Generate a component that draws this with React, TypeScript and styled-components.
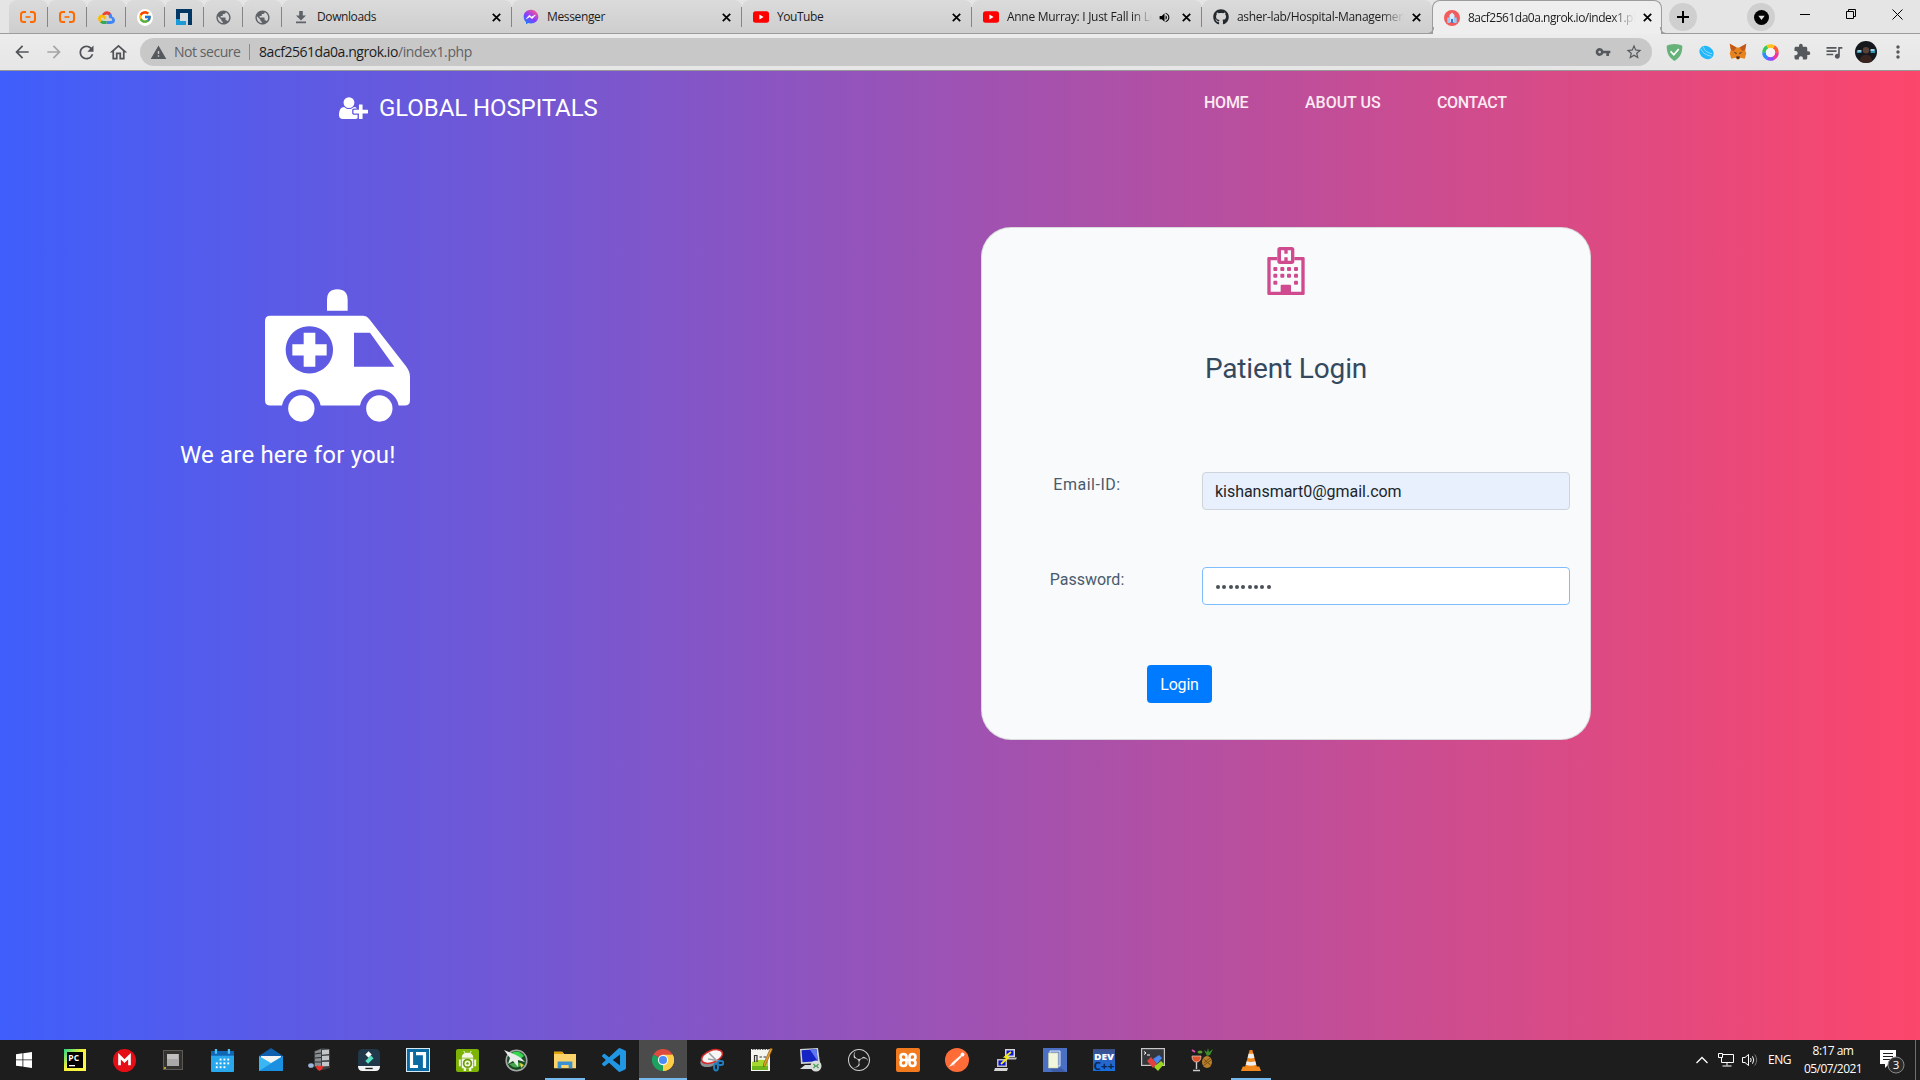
import React from "react";
import styled, { createGlobalStyle, css } from "styled-components";
import {
  MdArrowBack,
  MdArrowForward,
  MdRefresh,
  MdOutlineHome,
  MdWarning,
  MdVpnKey,
  MdStarBorder,
  MdExtension,
  MdQueueMusic,
  MdMoreVert,
  MdPublic,
  MdVolumeUp,
} from "react-icons/md";
import { FaGithub } from "react-icons/fa";
import { FcGoogle } from "react-icons/fc";
import { SiObsstudio } from "react-icons/si";

const ui = '"Open Sans", "Noto Sans", sans-serif';
const page = 'Roboto, "Open Sans", sans-serif';

const GlobalStyle = createGlobalStyle`
  * { box-sizing: border-box; }
  body { margin: 0; overflow: hidden; background: #1d1d1d; }
  svg { display: block; flex: none; }
`;

const Screen = styled.div`
  width: 1920px;
  height: 1080px;
  display: flex;
  flex-direction: column;
  overflow: hidden;
  font-family: ${ui};
`;

/* ---------- browser chrome ---------- */

const TabStrip = styled.div`
  flex: none;
  height: 34px;
  display: flex;
  align-items: stretch;
  padding-left: 9px;
  background: #e5e5e5;
  box-shadow: inset 0 -1px 0 #9c9c9c;
`;

const tabBase = css`
  flex: none;
  display: flex;
  align-items: center;
  padding-top: 1px;
  margin-bottom: 1px;
  background: linear-gradient(#dbdbdb, #cecece);
  border-radius: 8px 8px 0 0;
`;

const PinnedTab = styled.div`
  ${tabBase}
  width: 39px;
  padding-left: 11px;
`;

const Divider = styled.i`
  flex: none;
  width: 1px;
  height: 20px;
  background: #858585;
  margin-left: auto;
`;

const Tab = styled.div<{ $active?: boolean }>`
  ${tabBase}
  width: 230px;
  padding-left: 11px;
  ${(p) =>
    p.$active &&
    css`
      position: relative;
      padding: 0 0 0 11px;
      margin-bottom: 0;
      background: #eeeeee;
      border: 1px solid #9c9c9c;
      border-bottom: 0;
      &::before,
      &::after {
        content: "";
        position: absolute;
        bottom: 0;
        width: 6px;
        height: 6px;
        border-bottom: 1px solid #9c9c9c;
      }
      &::before {
        left: -6px;
        border-right: 1px solid #9c9c9c;
        border-bottom-right-radius: 6px;
      }
      &::after {
        right: -6px;
        border-left: 1px solid #9c9c9c;
        border-bottom-left-radius: 6px;
      }
    `}
`;

const Favicon = styled.span`
  flex: none;
  width: 16px;
  height: 16px;
  display: flex;
  align-items: center;
  justify-content: center;
`;

const TabTitle = styled.span<{ $spacing?: number; $fade?: boolean; $width?: number }>`
  flex: none;
  margin-left: 8px;
  width: ${(p) => p.$width ?? 166}px;
  overflow: hidden;
  white-space: nowrap;
  font-size: 12px;
  line-height: 18px;
  color: #1c1c1c;
  letter-spacing: ${(p) => p.$spacing ?? -0.35}px;
  ${(p) => p.$fade && "mask-image: linear-gradient(90deg, #000 86%, transparent 100%);"}
`;

const CloseBox = styled.span`
  flex: none;
  width: 9px;
  height: 9px;
  margin-left: 8px;
`;

const TabSound = styled.span`
  flex: none;
  width: 13px;
  margin: 0 3px 0 6px;
`;

const RoundButton = styled.span<{ $gap: number }>`
  flex: none;
  width: 28px;
  height: 28px;
  margin: 3px 0 0 ${(p) => p.$gap}px;
  border-radius: 50%;
  background: #cfcfcf;
  display: flex;
  align-items: center;
  justify-content: center;
`;

const WindowButtons = styled.div`
  display: flex;
  height: 28px;
  margin-left: 7px;
`;

const WindowButton = styled.span`
  width: 46px;
  display: flex;
  align-items: center;
  justify-content: center;
`;

const Toolbar = styled.div`
  flex: none;
  height: 37px;
  display: flex;
  align-items: center;
  padding: 0 6px;
  background: linear-gradient(#ececec, #e6e6e6);
  border-bottom: 1px solid #979797;
  color: #55585c;
`;

const NavButton = styled.span<{ $dim?: boolean }>`
  width: 32px;
  height: 32px;
  display: flex;
  align-items: center;
  justify-content: center;
  color: ${(p) => (p.$dim ? "#a5a5a5" : "#505357")};
`;

const Omnibox = styled.div`
  width: 1512px;
  height: 28px;
  margin: 0 6px;
  padding: 0 9px 0 10px;
  display: flex;
  align-items: center;
  border-radius: 14px;
  background: #c8c8c8;
`;

const AddressText = styled.span<{ $tone: string; $spacing: number }>`
  font-size: 14px;
  line-height: 20px;
  white-space: nowrap;
  color: ${(p) => p.$tone};
  letter-spacing: ${(p) => p.$spacing}px;
`;

const SecurityNote = styled.span`
  display: flex;
  align-items: center;
  width: 92px;
  margin-right: 7px;
  gap: 7px;
`;

const AddressRule = styled.i`
  width: 1px;
  height: 16px;
  margin-right: 9px;
  background: #8b8b8b;
`;

const OmniboxActions = styled.span`
  margin-left: auto;
  display: flex;
  align-items: center;
  gap: 14px;
`;

const Extension = styled.span`
  width: 32px;
  display: flex;
  justify-content: center;
  align-items: center;
`;

/* ---------- hospital page ---------- */

const Page = styled.main`
  flex: none;
  height: 969px;
  display: flex;
  flex-direction: column;
  font-family: ${page};
  color: #fff;
  background: linear-gradient(90deg, #3f5efb, #fc466b);
`;

const NavBar = styled.nav`
  height: 74px;
  display: flex;
  align-items: flex-start;
  padding-left: 339px;
`;

const Brand = styled.a`
  width: 865px;
  display: flex;
  align-items: center;
  padding-top: 22px;
  gap: 11px;
  font-size: 24px;
  line-height: 30px;
  letter-spacing: -0.08px;
  color: #fff;
`;

const NavLink = styled.a<{ $width: number; $spacing: number }>`
  width: ${(p) => p.$width}px;
  padding-top: 20px;
  font-size: 16px;
  line-height: 24px;
  font-weight: 500;
  letter-spacing: ${(p) => p.$spacing}px;
  color: #fbeaf3;
  white-space: nowrap;
`;

const Content = styled.section`
  flex: 1;
  display: flex;
  align-items: flex-start;
`;

const Welcome = styled.div`
  width: 981px;
  padding: 144px 0 0 180px;
`;

const Ambulance = styled.svg`
  width: 145px;
  height: 133px;
  margin-left: 85px;
`;

const Tagline = styled.h3`
  margin: 17px 0 0;
  font-size: 24px;
  line-height: 32px;
  font-weight: 400;
  letter-spacing: 0.17px;
`;

const LoginCard = styled.div`
  width: 610px;
  height: 513px;
  margin-top: 82px;
  padding: 19px 20px 0;
  border: 1px solid rgba(0, 0, 0, 0.125);
  border-radius: 30px;
  background: #f8fafc;
  color: #495057;
`;

const HospitalMark = styled.svg`
  width: 38px;
  height: 48px;
  margin: 0 auto;
`;

const CardTitle = styled.h3`
  margin: 56px 0 0;
  text-align: center;
  font-size: 28px;
  line-height: 36px;
  font-weight: 400;
  letter-spacing: -0.15px;
  color: #34495e;
`;

const Field = styled.label<{ $gap: number }>`
  display: grid;
  grid-template-columns: 170px 368px;
  column-gap: 30px;
  margin-top: ${(p) => p.$gap}px;
`;

const FieldLabel = styled.span<{ $spacing?: number }>`
  text-align: center;
  font-size: 16px;
  line-height: 25px;
  color: #495b6c;
  letter-spacing: ${(p) => p.$spacing ?? 0}px;
`;

const Input = styled.input`
  width: 368px;
  height: 38px;
  padding: 1px 12px 0;
  border: 1px solid #ced4da;
  border-radius: 4px;
  outline: none;
  background: #e8f0fe;
  font: 400 16px/24px ${page};
  letter-spacing: -0.03px;
  color: #212529;
`;

const PasswordBox = styled.div`
  width: 368px;
  height: 38px;
  padding: 0 13px;
  display: flex;
  align-items: center;
  gap: 2.35px;
  border: 1px solid #80bdff;
  border-radius: 4px;
  background: #fff;
`;

const Dot = styled.i`
  width: 4px;
  height: 4px;
  margin-top: 2px;
  border-radius: 50%;
  background: #495057;
`;

const LoginButton = styled.button`
  display: block;
  width: 65px;
  height: 38px;
  margin: 60px 0 0 145px;
  padding: 1px 0 0;
  border: 0;
  border-radius: 4px;
  background: #007bff;
  color: #fff;
  font: 400 16px/24px ${page};
  letter-spacing: -0.2px;
`;

/* ---------- taskbar ---------- */

const Taskbar = styled.footer`
  flex: none;
  height: 40px;
  display: flex;
  background: #1d1d1d;
  color: #fff;
`;

const Apps = styled.div`
  display: flex;
  gap: 1px;
`;

const AppSlot = styled.span<{ $state?: "open" | "current"; $first?: boolean }>`
  width: 48px;
  height: 40px;
  margin-right: ${(p) => (p.$first ? 2 : 0)}px;
  display: flex;
  align-items: center;
  justify-content: center;
  background: ${(p) => (p.$state === "current" ? "#4b4b4b" : "transparent")};
  ${(p) => p.$state === "current" && "box-shadow: inset 0 -2px 0 #76b9ed;"}
  ${(p) =>
    p.$state === "open" &&
    "background: linear-gradient(#76b9ed, #76b9ed) center bottom / 40px 2px no-repeat;"}
`;

const Tray = styled.div`
  margin-left: auto;
  display: flex;
  align-items: center;
`;

const TrayIcon = styled.span<{ $gap: number }>`
  margin-right: ${(p) => p.$gap}px;
`;

const Language = styled.span`
  width: 36px;
  font-size: 12px;
  line-height: 16px;
  letter-spacing: -0.45px;
`;

const Clock = styled.span`
  width: 58px;
  display: flex;
  flex-direction: column;
  align-items: center;
  font-size: 12px;
  line-height: 18px;
  letter-spacing: -0.55px;
  white-space: nowrap;
`;

const Notifications = styled.span`
  margin: 2px 9px 0 18px;
`;

const DesktopEdge = styled.i`
  width: 5px;
  height: 40px;
  border-left: 1px solid #6e6e6e;
`;

/* ---------- drawings ---------- */

const Svg = ({ size = 24, box = "0 0 24 24", children }: { size?: number; box?: string; children: React.ReactNode }) => (
  <svg width={size} height={size} viewBox={box}>
    {children}
  </svg>
);

const AliIcon = () => (
  <Svg size={16} box="0 0 16 16">
    <g fill="none" stroke="#ff6a00" strokeWidth="2">
      <path d="M6 3H3.600Q1 3 1 5.500v5Q1 13 3.600 13H6M10 3h2.400Q15 3 15 5.500v5Q15 13 12.400 13H10" />
      <path d="M5.500 8h5" strokeWidth="1.600" />
    </g>
  </Svg>
);

const CloudIcon = () => (
  <Svg size={17} box="0 0 24 20">
    <path d="M5 8Q7 1 13 1q4 0 6 4l-3 3q-2-3-5-2Q8 6 8 9z" fill="#ea4335" />
    <path d="M18 4q2 2 2 4.500 4 1.500 4 5.500 0 5-6 5h-6v-4h6q2 0 2-2 0-1.500-2-2h-2q0-2-1-3z" fill="#4285f4" />
    <path d="M5 18q-5-2-5-6.500Q0 6 6 6q4 0 6 4l-3 3q-1-3-3-3-2 0-2 2 0 1 1.500 2.500z" fill="#fbbc05" />
    <path d="M3 17l3-3 1 .8h5V19H7q-2 0-4-2z" fill="#34a853" />
  </Svg>
);

const GoogleTile = styled.span`
  width: 17px;
  height: 17px;
  border-radius: 50%;
  background: #fff;
  display: flex;
  align-items: center;
  justify-content: center;
`;

const LinuxFoundationIcon = () => (
  <Svg size={16} box="0 0 16 16">
    <path d="M0 0h16v16h-4V4H4v6H0z" fill="#003764" />
    <path d="M0 10h4v2h6v4H0z" fill="#1a9ad7" />
    <path d="M4 4h8v8H4z" fill="#d8dde0" />
  </Svg>
);

const DownloadIcon = () => (
  <Svg size={14} box="0 0 14 14">
    <path d="M5.200 1h3.600v4.500H12L7 10.500 2 5.500h3.200zM2 11.500h10v1.700H2z" fill="#5f6368" />
  </Svg>
);

const MessengerIcon = () => (
  <Svg size={16}>
    <defs>
      <linearGradient id="msg" x1="0.1" y1="1" x2="0.8" y2="0">
        <stop offset="0" stopColor="#0a84ff" />
        <stop offset=".5" stopColor="#8a3cff" />
        <stop offset="1" stopColor="#ff5c87" />
      </linearGradient>
    </defs>
    <path d="M12 1C5.500 1 1 5.600 1 11.600c0 3.200 1.300 5.900 3.500 7.800V23l3.400-1.900c1.300.4 2.700.6 4.100.6 6.500 0 11-4.600 11-10.100S18.500 1 12 1z" fill="url(#msg)" />
    <path d="M5 14.500l4.500-5.200 3.500 2.700 5.500-3-4.800 5.500-3.500-2.700z" fill="#fff" stroke="#fff" />
  </Svg>
);

const YoutubeIcon = () => (
  <Svg size={16} box="0 0 16 16">
    <rect y="2.300" width="16" height="11.400" rx="2.500" fill="#f00" />
    <path d="M6.400 5.600v4.800L10.600 8z" fill="#fff" />
  </Svg>
);

const SiteIcon = () => (
  <Svg size={16} box="0 0 16 16">
    <circle cx="8" cy="8" r="8" fill="#f25b5b" />
    <path d="M5.500 5L8 2.500 10.500 5v7h-5z" fill="#d7ecff" />
    <path d="M3.300 7.500h3V13h-3zM9.700 7.500h3V13h-3z" fill="#9bc8f5" />
    <path d="M7 9h2v4H7z" fill="#3b7bc4" />
  </Svg>
);

const Cross = () => (
  <Svg size={9} box="0 0 9 9">
    <path d="M.8.800l7.400 7.400M8.200.800L.8 8.200" stroke="#000" strokeWidth="1.700" />
  </Svg>
);

const Adguard = () => (
  <Svg size={17}>
    <path d="M12 0c4 0 8 1 11 2.500 0 8-1 15-11 21.500C2 17.500 1 10.500 1 2.500 4 1 8 0 12 0z" fill="#67b279" />
    <path d="M6.500 10.500l4.500 4.800L18 7" fill="none" stroke="#fff" strokeWidth="2.400" />
  </Svg>
);

const BlueSwirl = () => (
  <Svg size={15}>
    <ellipse cx="12" cy="12" rx="12" ry="10" transform="rotate(35 12 12)" fill="#22b6fb" />
    <path d="M3 6q4 10 17 12M7 3q2 9 14 11" fill="none" stroke="#a5e4ff" strokeWidth="1.300" />
  </Svg>
);

const Fox = () => (
  <Svg size={18}>
    <path d="M1 1l9 5h4l9-5-1.500 8 1.500 5-2 7-6-1.500L13 22h-2l-2.500-2.500L3 21l-2-7 1.500-5z" fill="#e8821e" />
    <path d="M1 1l9 5-4 5-3.500-2zM23 1l-9 5 4 5 3.500-2z" fill="#c1581a" />
    <path d="M6 12l4 1v2zM18 12l-4 1v2z" fill="#27313a" />
    <path d="M9.500 18h5l-1 3h-3z" fill="#3b2a22" />
  </Svg>
);

const ColorRing = () => (
  <Svg size={17}>
    <g fill="none" strokeWidth="5" strokeDasharray="9.600 47.900">
      {["#ff5a36", "#f0379b", "#8a4dff", "#2e8bff", "#35c759", "#ffc21a"].map((c, i) => (
        <circle key={c} cx="12" cy="12" r="9.150" stroke={c} transform={`rotate(${-60 + i * 60} 12 12)`} />
      ))}
    </g>
    <circle cx="12" cy="12" r="6.500" fill="#f4f4f4" />
  </Svg>
);

const Avatar = () => (
  <Svg size={22}>
    <clipPath id="av">
      <circle cx="12" cy="12" r="12" />
    </clipPath>
    <g clipPath="url(#av)">
      <rect width="24" height="24" fill="#14181d" />
      <path d="M2 10h5v3H2zM17 9h5v4h-5z" fill="#2f93b3" />
      <path d="M3 10h4v1.500H3zM17 9h4v1.500h-4z" fill="#cfe9ee" />
      <circle cx="12" cy="10" r="3.500" fill="#5a4036" />
      <path d="M5 24q0-9 7-9t7 9z" fill="#3a2420" />
    </g>
  </Svg>
);

const UserPlus = () => (
  <svg width="29" height="22" viewBox="0 0 2048 1536">
    <path
      fill="#fff"
      d="M704 768q-159 0-271.500-112.500T320 384 432.500 112.500 704 0t271.500 112.500T1088 384 975.500 655.500 704 768zm960 128h352q13 0 22.500 9.500t9.500 22.500v192q0 13-9.500 22.500t-22.500 9.500h-352v352q0 13-9.500 22.500t-22.500 9.500h-192q-13 0-22.500-9.500t-9.500-22.500v-352h-352q-13 0-22.500-9.500t-9.500-22.500V928q0-13 9.500-22.500t22.500-9.500h352V544q0-13 9.500-22.500t22.500-9.500h192q13 0 22.500 9.500t9.500 22.500v352zm-736 224q0 52 38 90t90 38h256v238q-68 50-171 50H267q-121 0-194-69T0 1279q0-53 3.500-103.500t14-109T44 958t43-97.500 62-81 85.500-53.500T346 704q19 0 39 17 79 61 154.500 91.500T704 843t164.500-30.500T1023 721q20-17 39-17 132 0 217 96h-223q-52 0-90 38t-38 90v192z"
    />
  </svg>
);

const apps: { name: string; state?: "open" | "current"; icon: React.ReactNode }[] = [
  {
    name: "start",
    icon: (
      <Svg size={16} box="0 0 16 16">
        <path d="M0 2.200l6.500-.9v6.200H0zM7.300 1.200L16 0v7.500H7.300zM0 8.300h6.500v6.300L0 13.700zM7.300 8.300H16V16l-8.700-1.300z" fill="#fff" />
      </Svg>
    ),
  },
  {
    name: "pycharm",
    icon: (
      <Svg size={22} box="0 0 22 22">
        <defs>
          <linearGradient id="pc" x2="1" y2="1">
            <stop offset="0" stopColor="#21d789" />
            <stop offset=".45" stopColor="#f4f03a" />
            <stop offset="1" stopColor="#fcf84a" />
          </linearGradient>
        </defs>
        <rect width="22" height="22" fill="url(#pc)" />
        <rect x="3" y="3" width="16" height="16" fill="#000" />
        <text x="4.300" y="11.500" fontSize="8.500" fontWeight="700" fontFamily="Open Sans" fill="#fff">PC</text>
        <path d="M5 16h6v1.300H5z" fill="#fff" />
      </Svg>
    ),
  },
  {
    name: "mega",
    icon: (
      <Svg size={23}>
        <circle cx="12" cy="12" r="12" fill="#e50e16" />
        <path d="M6.800 17V7.500L12 12.600l5.200-5.100V17" fill="none" stroke="#fff" strokeWidth="2.800" />
      </Svg>
    ),
  },
  {
    name: "cpu",
    icon: (
      <Svg size={20} box="0 0 20 20">
        <rect width="20" height="20" fill="#5a5955" />
        <rect x="1" y="1" width="18" height="18" fill="#33322f" />
        <rect x="4" y="4" width="12" height="12" fill="#a9a9a9" />
        <rect x="4" y="4" width="11" height="5" fill="#c0c0c0" />
        <path d="M1 17h2v2H1z" fill="#b99a3c" />
      </Svg>
    ),
  },
  {
    name: "calendar",
    icon: (
      <Svg size={23}>
        <rect y="2" width="24" height="22" rx="1" fill="#2aa8ee" />
        <path d="M0 2h24v5H0z" fill="#1066b5" />
        <path d="M4 0h2.400v5H4zM17.500 0h2.400v5h-2.400z" fill="#4bc3f5" />
        <g fill="#fff">
          {[[9, 10], [13, 10], [17, 10], [5, 14], [9, 14], [13, 14], [17, 14], [5, 18], [9, 18], [13, 18]].map(([x, y]) => (
            <rect key={`${x}-${y}`} x={x} y={y} width="2" height="2" />
          ))}
        </g>
      </Svg>
    ),
  },
  {
    name: "mail",
    icon: (
      <Svg>
        <path d="M0 8L12 0l12 8v4H0z" fill="#0f5fae" />
        <path d="M2 8h20v8H2z" fill="#f3f3f3" />
        <path d="M0 8l12 7 12-7v15H0z" fill="#39b7f5" />
        <path d="M0 23L24 8v15z" fill="#1b8fe0" />
      </Svg>
    ),
  },
  {
    name: "server",
    icon: (
      <Svg>
        <path d="M6 3l8-3 8 1v19l-7 2-9-3z" fill="#3d4043" />
        <path d="M7 3.500l6-2.500v19l-6-2z" fill="#8b8e90" />
        <path d="M14 2l7-.5v4.500l-7 .8zM14 8l7-.5v4.500l-7 .5zM14 14l7-.2V18l-7 .6z" fill="#c3c6c8" />
        <path d="M7 6l6-1M7 10l6-.5M7 14h6" stroke="#2b2e30" />
        <ellipse cx="3" cy="17.500" rx="2.800" ry="2.300" fill="#9eb6dc" />
        <path d="M8 18.500q2-2 3.500 0 2-2 3.500 0 0 2.500-3.500 4.500Q8 21 8 18.500z" fill="#e5322d" />
      </Svg>
    ),
  },
  {
    name: "filmora",
    icon: (
      <Svg size={22}>
        <rect width="24" height="24" rx="5" fill="#20384a" />
        <path d="M11.500 2.500L15 6l-3.500 3.500L8 6z" fill="#fff" />
        <path d="M14 7l3 3-6 6-3-3z" fill="#55e0c2" />
        <path d="M0 18.500h24q0 5.500-5 5.500H5q-5 0-5-5.500z" fill="#f4f4f4" />
        <path d="M8 20.500h8v1.500H8z" fill="#222" />
      </Svg>
    ),
  },
  {
    name: "ltspice",
    icon: (
      <Svg>
        <rect width="24" height="24" fill="#d5e9f5" />
        <rect x="1" y="1" width="22" height="22" fill="#0a6aa1" />
        <path d="M5.500 4v14.500h6.500M10 5.700h8.500V20" fill="none" stroke="#fff" strokeWidth="3.200" />
      </Svg>
    ),
  },
  {
    name: "android",
    icon: (
      <Svg size={23}>
        <rect width="24" height="24" rx="2" fill="#7cb305" />
        <path d="M6 9q0-5 6-5t6 5zM6 10h12v10H6zM3 11h2v7H3zM19 11h2v7h-2zM8 20h2.500v3H8zM13.500 20H16v3h-2.500z" fill="#f2f7e4" />
        <path d="M8 2l2 3M16 2l-2 3" stroke="#f2f7e4" />
        <circle cx="12" cy="15" r="4" fill="none" stroke="#6a9a0a" strokeWidth="1.800" />
        <circle cx="12" cy="15" r="1.300" fill="#6a9a0a" />
      </Svg>
    ),
  },
  {
    name: "modeler",
    icon: (
      <Svg>
        <circle cx="12.500" cy="12.500" r="10.300" fill="#174a22" stroke="#a4a8a5" strokeWidth="1.600" />
        <path d="M6 6q8-6 14 2l-4 3z" fill="#37d650" />
        <path d="M5 16q7 7 14 0l-6-2z" fill="#48a64c" />
        <path d="M0 2l12 5 5 3 4 4-7-2 0 7-5-6-5 3 2-6z" fill="#e9ecea" />
        <path d="M16 15l4 2-3 3z" fill="#e7d33f" />
      </Svg>
    ),
  },
  {
    name: "explorer",
    state: "open",
    icon: (
      <Svg size={22}>
        <path d="M0 3h9l2 2.500h13V21H0z" fill="#fbd36a" />
        <path d="M0 3h9l2 2.500H0z" fill="#e2a20b" />
        <path d="M4 21v-7.500h16V21h-4v-3.500H8V21z" fill="#3a91d0" />
      </Svg>
    ),
  },
  {
    name: "vscode",
    icon: (
      <Svg>
        <path
          fill="#2196e3"
          d="M23.150 2.587L18.210.21a1.494 1.494 0 0 0-1.705.29l-9.460 8.630-4.120-3.128a.999.999 0 0 0-1.276.057L.327 7.261A1 1 0 0 0 .326 8.740L3.899 12 .326 15.260a1 1 0 0 0 .001 1.479L1.650 17.940a.999.999 0 0 0 1.276.057l4.120-3.128 9.460 8.630a1.492 1.492 0 0 0 1.704.29l4.942-2.377A1.500 1.500 0 0 0 24 20.060V3.939a1.500 1.500 0 0 0-.85-1.352zm-5.146 14.861L10.826 12l7.178-5.448v10.896z"
        />
      </Svg>
    ),
  },
  {
    name: "chrome",
    state: "current",
    icon: (
      <Svg size={22}>
        <path d="M12 12L1.600 6A12 12 0 0 1 22.400 6z" fill="#dd4b3e" />
        <path d="M12 12L22.400 6A12 12 0 0 1 12 24z" fill="#fdce45" />
        <path d="M12 12v12A12 12 0 0 1 1.600 6z" fill="#1da15f" />
        <path d="M12 6.400h10.600A12 12 0 0 1 12 24L17 15z" fill="#fdce45" />
        <circle cx="12" cy="12" r="5.600" fill="#f5f5f5" />
        <circle cx="12" cy="12" r="4.400" fill="#4c8bf5" />
      </Svg>
    ),
  },
  {
    name: "snip",
    icon: (
      <Svg>
        <ellipse cx="10" cy="12.500" rx="10" ry="6" transform="rotate(-20 10 12.500)" fill="#8b9095" />
        <ellipse cx="12" cy="8.500" rx="11" ry="6" transform="rotate(-22 12 8.500)" fill="#f6f6f6" stroke="#d52b2b" strokeWidth="1.500" />
        <path d="M9 5l9 9M8 11l12 2" stroke="#9aa0a5" strokeWidth="1.500" />
        <ellipse cx="20.500" cy="15" rx="3" ry="2" fill="none" stroke="#1f7fc0" strokeWidth="2" />
        <ellipse cx="16" cy="19" rx="2" ry="3.500" fill="none" stroke="#1f7fc0" strokeWidth="2" />
      </Svg>
    ),
  },
  {
    name: "notepad++",
    icon: (
      <Svg>
        <path d="M2 1h19v22H2z" fill="#f4f6ef" />
        <path d="M3 14q8-4 16-1v9H3z" fill="#a6d92f" />
        <path d="M3 18h16v4H3z" fill="#6db51d" />
        <path d="M3 1.500h17" stroke="#666" strokeWidth="1.200" strokeDasharray="1.500 1" />
        <path d="M5.500 7v7M5.500 7.500H8V14M10.500 9h2.500M14.500 9H17" fill="none" stroke="#333" strokeWidth="1.200" />
        <path d="M21.500 0L23.500 1l-7 16-2 2V16z" fill="#e8a02c" stroke="#7b4c10" strokeWidth=".6" />
      </Svg>
    ),
  },
  {
    name: "remote desktop",
    icon: (
      <Svg>
        <path d="M2 1l18-1 2 15-19 1z" fill="#cfd3d8" />
        <path d="M3.500 2.300l15-1 1.300 12-15.300 1z" fill="#1423c4" />
        <path d="M12 1.800l6.500-.5 1.300 12z" fill="#5f78ef" />
        <path d="M7 17h8l2 4H2z" fill="#d9dcdf" />
        <circle cx="18" cy="18" r="5.500" fill="#d8dcd8" />
        <path d="M15.500 16l2 2-2 2M20.500 16l-2 2 2 2" fill="none" stroke="#3c9a47" strokeWidth="1.100" />
      </Svg>
    ),
  },
  { name: "obs", icon: <SiObsstudio size={22} color="#d2d2d2" /> },
  {
    name: "xampp",
    icon: (
      <Svg>
        <rect width="24" height="24" rx="2" fill="#f17a1f" />
        <path
          d="M12 12H7.500Q4.500 12 4.500 9t3-3 3 3v2.500M12 12h4.500q3 0 3-3t-3-3-3 3v2.500M12 12H7.500q-3 0-3 3t3 3 3-3v-2.500M12 12h4.500q3 0 3 3t-3 3-3-3v-2.500"
          fill="none"
          stroke="#fff"
          strokeWidth="2.600"
        />
      </Svg>
    ),
  },
  {
    name: "postman",
    icon: (
      <Svg>
        <circle cx="12" cy="12" r="12" fill="#ff6c37" />
        <path d="M4.500 18.500l3-4 8-7 1 1.300-7.500 7.200zM6 17h4" fill="#fff" stroke="#fff" strokeWidth=".4" />
        <circle cx="17.500" cy="6.500" r="1.900" fill="#fff" />
      </Svg>
    ),
  },
  {
    name: "putty",
    icon: (
      <Svg>
        <path d="M11 1h10v8H11z" fill="#d6d6d6" />
        <path d="M12.500 2.500h7v5h-7z" fill="#0b13d6" />
        <path d="M12 9.500h11l-1 2H12zM3 11h10v8H3z" fill="#bfbfbf" />
        <path d="M4.500 12.500h7v5h-7z" fill="#0b13d6" />
        <path d="M1 20h13l-1 3H0z" fill="#d6d6d6" />
        <path d="M17 4l-6 5 3 .5-7 6.500" fill="none" stroke="#f4ea1c" strokeWidth="1.800" />
      </Svg>
    ),
  },
  {
    name: "book",
    icon: (
      <Svg>
        <rect width="24" height="24" fill="#4a6fc3" />
        <path d="M6 20h12l5 4H10z" fill="#3d5da8" />
        <path d="M7 3h10v15H7z" fill="#6f8fd6" stroke="#dfe7f7" />
        <path d="M5.500 5H15v15H5.500z" fill="#f1f6dd" stroke="#c6d3a9" strokeWidth=".6" />
      </Svg>
    ),
  },
  {
    name: "dev-c++",
    icon: (
      <Svg size={22} box="0 0 22 22">
        <defs>
          <linearGradient id="dev" x2="0" y2="1">
            <stop offset="0" stopColor="#3c4f86" />
            <stop offset=".5" stopColor="#2a63c4" />
            <stop offset="1" stopColor="#1670e0" />
          </linearGradient>
        </defs>
        <rect width="22" height="22" fill="url(#dev)" />
        <text x="1" y="10.500" fontSize="9.500" fontWeight="800" fontFamily="Open Sans" fill="#fff" textLength="20" lengthAdjust="spacingAndGlyphs">DEV</text>
        <text x="0.500" y="20.500" fontSize="10" fontWeight="700" fontFamily="Open Sans" fill="#0b2450" textLength="21" lengthAdjust="spacingAndGlyphs">C++</text>
      </Svg>
    ),
  },
  {
    name: "terminal",
    icon: (
      <Svg>
        <rect width="24" height="18" fill="#c8c8c8" />
        <rect x="1.200" y="1.200" width="21.600" height="15.600" fill="#34383b" />
        <path d="M3 3.500l2 1.500-2 1.500M6 7h3" stroke="#fff" fill="none" />
        <path d="M6 13l4-4 6 7-4 4z" fill="#e2403c" />
        <path d="M12 11l6-4 3 3-5 6z" fill="#4a8af0" />
        <path d="M13 19l7-6 3 3-6 7z" fill="#9bd51c" />
      </Svg>
    ),
  },
  {
    name: "cocktail",
    icon: (
      <Svg>
        <ellipse cx="17" cy="14" rx="5" ry="6" fill="#b9802b" />
        <path d="M13.500 11l7 6M14 15l6-5M13 18l8-6" stroke="#7a4d12" />
        <path d="M17 8l-3-6 3 2 1-4 1 4 4-3-3 6z" fill="#3f8c2b" />
        <path d="M2 8h9q0 6-4.500 6T2 8z" fill="#e2552c" stroke="#e5d0c4" strokeWidth=".7" />
        <path d="M6.500 14v7M3 22.500h7" stroke="#c9c9c9" strokeWidth="1.400" />
        <path d="M2 2l3 2" stroke="#e14fb2" strokeWidth="2" />
        <ellipse cx="10" cy="4" rx="2.500" ry="1.500" fill="#57a02e" />
      </Svg>
    ),
  },
  {
    name: "vlc",
    state: "open",
    icon: (
      <Svg size={22}>
        <path d="M3 19h18l2 5H1z" fill="#f08a1c" />
        <path d="M10.500 1h3L18.500 20q-6.500 3-13 0z" fill="#f3871c" />
        <path d="M9.400 5.200h5.200l1.100 4.300q-3.700 1.500-7.400 0zM7.300 13.300q4.700 1.700 9.400 0l1 3.900q-5.700 2-11.400 0z" fill="#eceef0" />
      </Svg>
    ),
  },
];

const pinned: [string, React.ReactNode][] = [
  ["ali-1", <AliIcon />],
  ["ali-2", <AliIcon />],
  ["cloud", <CloudIcon />],
  ["google", <GoogleTile><FcGoogle size={14} /></GoogleTile>],
  ["lf", <LinuxFoundationIcon />],
  ["web-1", <MdPublic size={17} color="#5f6368" />],
  ["web-2", <MdPublic size={17} color="#5f6368" />],
];

const tabs: { title: string; icon: React.ReactNode; spacing?: number; fade?: boolean; sound?: boolean; active?: boolean }[] = [
  { title: "Downloads", icon: <DownloadIcon />, spacing: -0.4 },
  { title: "Messenger", icon: <MessengerIcon />, spacing: -0.36 },
  { title: "YouTube", icon: <YoutubeIcon />, spacing: -0.45 },
  { title: "Anne Murray: I Just Fall in Love", icon: <YoutubeIcon />, spacing: -0.29, fade: true, sound: true },
  { title: "asher-lab/Hospital-Management", icon: <FaGithub size={16} color="#24292e" />, spacing: -0.3, fade: true },
  { title: "8acf2561da0a.ngrok.io/index1.php", icon: <SiteIcon />, spacing: -0.49, fade: true, active: true },
];

const windows: [number, number][] = [
  [60, 87], [81, 87], [101, 87], [122, 87],
  [60, 107], [81, 107], [101, 107], [122, 107],
  [60, 128], [122, 128],
];

function BrowserChrome() {
  return (
    <>
      <TabStrip>
        {pinned.map(([key, icon]) => (
          <PinnedTab key={key}>
            <Favicon>{icon}</Favicon>
            <Divider />
          </PinnedTab>
        ))}
        {tabs.map((t, i) => (
          <Tab key={t.title} $active={t.active}>
            <Favicon>{t.icon}</Favicon>
            <TabTitle $spacing={t.spacing} $fade={t.fade} $width={t.sound ? 145 : 167}>
              {t.title}
            </TabTitle>
            {t.sound && (
              <TabSound>
                <MdVolumeUp size={13} color="#000" />
              </TabSound>
            )}
            <CloseBox>
              <Cross />
            </CloseBox>
            {i < 4 && <Divider />}
          </Tab>
        ))}
        <RoundButton $gap={7}>
          <Svg size={12} box="0 0 12 12"><path d="M6 0v12M0 6h12" stroke="#000" strokeWidth="2" /></Svg>
        </RoundButton>
        <RoundButton $gap={50}>
          <Svg size={15} box="0 0 15 15">
            <circle cx="7.500" cy="7.500" r="7.500" fill="#000" />
            <path d="M4.300 5.800h6.400L7.500 10z" fill="#e0e0e0" />
          </Svg>
        </RoundButton>
        <WindowButtons>
          <WindowButton>
            <Svg size={10} box="0 0 10 10"><path d="M0 5.500h10" stroke="#000" /></Svg>
          </WindowButton>
          <WindowButton>
            <Svg size={10} box="0 0 10 10">
              <path d="M.5 2.500h7v7h-7zM2.500 2.500v-2h7v7h-2" fill="none" stroke="#000" />
            </Svg>
          </WindowButton>
          <WindowButton>
            <Svg size={11} box="0 0 11 11"><path d="M.5.500l10 10M10.500.500l-10 10" stroke="#000" /></Svg>
          </WindowButton>
        </WindowButtons>
      </TabStrip>
      <Toolbar>
        <NavButton><MdArrowBack size={20} /></NavButton>
        <NavButton $dim><MdArrowForward size={20} /></NavButton>
        <NavButton><MdRefresh size={21} /></NavButton>
        <NavButton><MdOutlineHome size={21} /></NavButton>
        <Omnibox>
          <SecurityNote>
            <MdWarning size={17} />
            <AddressText $tone="#5f6165" $spacing={-0.45}>Not secure</AddressText>
          </SecurityNote>
          <AddressRule />
          <AddressText $tone="#1b1c1e" $spacing={-0.45}>8acf2561da0a.ngrok.io</AddressText>
          <AddressText $tone="#5f6165" $spacing={-0.4}>/index1.php</AddressText>
          <OmniboxActions>
            <MdVpnKey size={16} />
            <MdStarBorder size={18} />
          </OmniboxActions>
        </Omnibox>
        <Extension><Adguard /></Extension>
        <Extension><BlueSwirl /></Extension>
        <Extension><Fox /></Extension>
        <Extension><ColorRing /></Extension>
        <Extension><MdExtension size={18} /></Extension>
        <Extension><MdQueueMusic size={20} /></Extension>
        <Extension><Avatar /></Extension>
        <Extension><MdMoreVert size={20} /></Extension>
      </Toolbar>
    </>
  );
}

function HospitalPage() {
  return (
    <Page>
      <NavBar>
        <Brand>
          <UserPlus />
          GLOBAL HOSPITALS
        </Brand>
        <NavLink $width={101} $spacing={-0.25}>HOME</NavLink>
        <NavLink $width={132} $spacing={-0.02}>ABOUT US</NavLink>
        <NavLink $width={80} $spacing={-0.35}>CONTACT</NavLink>
      </NavBar>
      <Content>
        <Welcome>
          <Ambulance viewBox="315 655 435 398">
            <path d="M501 720v-33q0-32 31-32t31 32v33z" fill="#fff" />
            <path
              fillRule="evenodd"
              fill="#fff"
              d="M331 735H610q10 0 17 9L738 886q12 16 12 32v70q0 16-16 16h-18a59 59 0 0 0-116 0H482a59 59 0 0 0-116 0H331q-16 0-16-16V751q0-16 16-16zM448 766a71 71 0 1 0 .1 0zM582 786v102H703L630 786z"
            />
            <path d="M431 786h35v34h34v34h-34v34h-35v-34h-34v-34h34z" fill="#fff" />
            <circle cx="424" cy="1013" r="39.500" fill="#fff" />
            <circle cx="658" cy="1013" r="39.500" fill="#fff" />
          </Ambulance>
          <Tagline>We are here for you!</Tagline>
        </Welcome>
        <LoginCard>
          <HospitalMark viewBox="35 21 114 144">
            <g fill="#cf4a8f">
              <path fillRule="evenodd" d="M40 51h26v10H46v94h92V61h-21V51h27q4 0 4 4v106q0 4-4 4H40q-4 0-4-4V55q0-4 4-4z" />
              <rect x="66" y="21" width="51" height="51" rx="8" />
              {windows.map(([x, y]) => (
                <rect key={`${x}-${y}`} x={x - 6} y={y - 6} width="12" height="12" rx="3" />
              ))}
              <path d="M76 137q0-3 3-3h25q3 0 3 3v28H76z" />
            </g>
            <path d="M77 31h10v10h10V31h10v31H97V52H87v10H77z" fill="#f8fafc" />
          </HospitalMark>
          <CardTitle>Patient Login</CardTitle>
          <Field $gap={85}>
            <FieldLabel $spacing={0.5}>Email-ID:</FieldLabel>
            <Input readOnly value="kishansmart0@gmail.com" />
          </Field>
          <Field $gap={57}>
            <FieldLabel>Password:</FieldLabel>
            <PasswordBox>
              {Array.from({ length: 9 }, (_, i) => (
                <Dot key={i} />
              ))}
            </PasswordBox>
          </Field>
          <LoginButton>Login</LoginButton>
        </LoginCard>
      </Content>
    </Page>
  );
}

function WindowsTaskbar() {
  return (
    <Taskbar>
      <Apps>
        {apps.map((a, i) => (
          <AppSlot key={a.name} $state={a.state} $first={i === 0}>
            {a.icon}
          </AppSlot>
        ))}
      </Apps>
      <Tray>
        <TrayIcon $gap={10}>
          <svg width="12" height="8" viewBox="0 0 12 8"><path d="M.5 7L6 1.500 11.500 7" fill="none" stroke="#fff" strokeWidth="1.300" /></svg>
        </TrayIcon>
        <TrayIcon $gap={8}>
          <svg width="16" height="14" viewBox="0 0 16 14">
            <path d="M5 1.500h10.500v8H3.500V5M.5.500h4v4h-4zM9 9.500v3M4.500 13h9" fill="none" stroke="#fff" />
          </svg>
        </TrayIcon>
        <TrayIcon $gap={10}>
          <svg width="16" height="14" viewBox="0 0 16 14">
            <path d="M.5 4.500h2.500l3.500-3v11L3 9.500H.5z" fill="none" stroke="#fff" />
            <path d="M8.500 5q1.300 2 0 4M10.500 3.300q2.500 3.700 0 7.400" fill="none" stroke="#fff" />
            <path d="M12.700 1.500q4 5.500 0 11" fill="none" stroke="#777" />
          </svg>
        </TrayIcon>
        <Language>ENG</Language>
        <Clock>
          <span>8:17 am</span>
          <span>05/07/2021</span>
        </Clock>
        <Notifications>
          <svg width="26" height="26" viewBox="0 0 26 26">
            <path d="M0 2h16v14H9l-4 4v-4H0z" fill="#fff" />
            <path d="M3 5.500h10M3 8.500h10M3 11.500h7" stroke="#1d1d1d" />
            <circle cx="16" cy="17" r="8" fill="#2b2b2b" stroke="#8a8a8a" />
            <text x="16" y="21" textAnchor="middle" fontSize="11.500" fontFamily="Open Sans" fill="#fff">3</text>
          </svg>
        </Notifications>
        <DesktopEdge />
      </Tray>
    </Taskbar>
  );
}

export default function App() {
  return (
    <Screen>
      <GlobalStyle />
      <BrowserChrome />
      <HospitalPage />
      <WindowsTaskbar />
    </Screen>
  );
}
